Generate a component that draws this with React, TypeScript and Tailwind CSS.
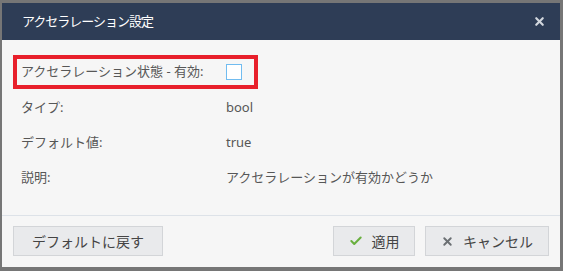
import { Check, X } from 'lucide-react';

const rows = [
  { label: 'タイプ:', value: 'bool' },
  { label: 'デフォルト値:', value: 'true' },
  { label: '説明:', value: 'アクセラレーションが有効かどうか' },
];

export default function App() {
  return (
    <div
      className="w-[563px] h-[271px] bg-[#767676] pt-[3px] pl-[2px]"
      style={{ fontFamily: '"Noto Sans", "Noto Sans CJK JP", sans-serif' }}
    >
      <div className="w-[558px] h-[264px] bg-[#f6f6f6] flex flex-col">
        {/* Header */}
        <div className="h-[37px] bg-[#2e3d56] flex items-center justify-between pl-[20px] pr-[14px]">
          <span className="text-[13px] tracking-[-1px] text-white">アクセラレーション設定</span>
          <X className="w-[13px] h-[13px] text-[#d3d8df]" strokeWidth={4} />
        </div>

        {/* Body */}
        <div className="flex-1 pt-[15px] px-[19px] text-[13px] text-[#575757]">
          <div className="relative h-[35px] flex items-center pb-[1px]">
            <span className="w-[205px]">アクセラレーション状態 - 有効:</span>
            <span className="w-[16px] h-[16px] bg-white border-[1.5px] border-[#71bcf0]" />
            <div className="absolute left-[-8px] top-0 w-[245px] h-[34px] border-4 border-[#e8202b]" />
          </div>
          {rows.map(row => (
            <div key={row.label} className="h-[35px] flex items-center">
              <span className="w-[205px]">{row.label}</span>
              <span>{row.value}</span>
            </div>
          ))}
        </div>

        {/* Footer */}
        <div className="h-[52px] border-t border-[#dde2e8] flex items-start justify-between pt-[10px] px-[11px] text-[14px] text-[#444]">
          <button className="w-[150px] h-[30px] bg-[#e9eaec] border border-[#d3d5d8] flex items-center justify-center">
            デフォルトに戻す
          </button>
          <div className="flex gap-[10px]">
            <button className="w-[82px] h-[30px] bg-[#e9eaec] border border-[#d3d5d8] flex items-center justify-center gap-[9px]">
              <Check className="w-[14px] h-[14px] text-[#69b03f]" strokeWidth={3.5} />
              適用
            </button>
            <button className="w-[124px] h-[30px] bg-[#e9eaec] border border-[#d3d5d8] flex items-center justify-center gap-[9px]">
              <X className="w-[13px] h-[13px] text-[#6b6f73]" strokeWidth={3.5} />
              キャンセル
            </button>
          </div>
        </div>
      </div>
    </div>
  );
}
